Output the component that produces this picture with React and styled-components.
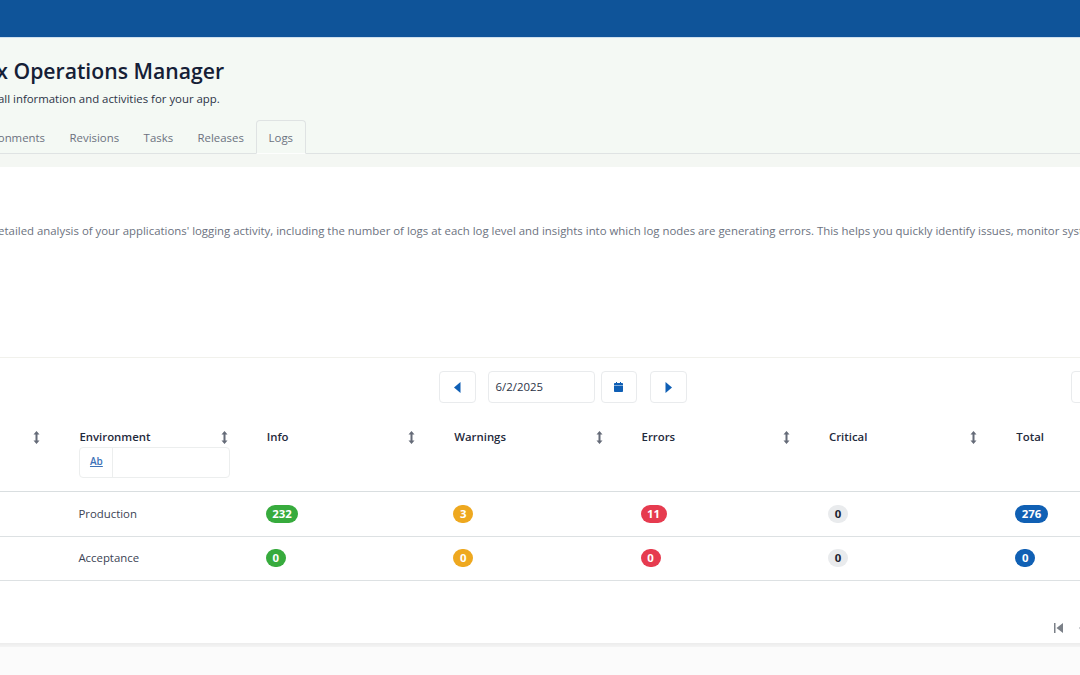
import React from "react";
import styled, { createGlobalStyle } from "styled-components";

const GlobalStyle = createGlobalStyle`
  html, body {
    margin: 0;
    height: 100%;
    overflow: hidden;
    background: #fbfbfb;
    font-family: "Open Sans", "Liberation Sans", sans-serif;
  }
`;

const columns = [
  { title: "Application" },
  { title: "Environment", filter: true },
  { title: "Info" },
  { title: "Warnings" },
  { title: "Errors" },
  { title: "Critical" },
  { title: "Total" },
];

const rows = [
  { env: "Production", info: 232, warnings: 3, errors: 11, critical: 0, total: 276 },
  { env: "Acceptance", info: 0, warnings: 0, errors: 0, critical: 0, total: 0 },
];

const SortIcon = () => (
  <svg width="7" height="13" viewBox="0 0 7 13" fill="#656b78">
    <path d="M3.500 0 6.500 3.600H4.500v5.800h2L3.500 13 .5 9.400h2V3.600H.5z" />
  </svg>
);

const CaretLeft = () => (
  <svg width="7" height="11" viewBox="0 0 7 11" fill="#0f5fb5">
    <path d="M6.500 0v11L0 5.500z" />
  </svg>
);

const CaretRight = () => (
  <svg width="7" height="11" viewBox="0 0 7 11" fill="#0f5fb5">
    <path d="M.5 0v11L7 5.500z" />
  </svg>
);

const CalendarIcon = () => (
  <svg width="9" height="10" viewBox="0 0 9 10" fill="#0f5fb5">
    <path d="M2 0h1v1h3V0h1v1h1.200c.4 0 .8.4.8.8V3H0V1.800C0 1.400.4 1 .8 1H2zM0 3.600h9v5.600c0 .4-.4.8-.8.8H.8c-.4 0-.8-.4-.8-.8z" />
  </svg>
);

const FirstPageIcon = () => (
  <svg width="9" height="10" viewBox="0 0 9 10" fill="#7b8088">
    <path d="M0 0h1.500v10H0zM9 0v10L2.500 5z" />
  </svg>
);

const PrevPageIcon = () => (
  <svg width="7" height="10" viewBox="0 0 7 10" fill="#7b8088">
    <path d="M7 0v10L0 5z" />
  </svg>
);

const App = () => {
  return (
    <>
      <GlobalStyle />
      <TopBar />
      <Page>
        <Header>
          <Title>Mendix Operations Manager</Title>
          <Subtitle>Overview of all information and activities for your app.</Subtitle>
          <Tabs>
            <Tab>Environments</Tab>
            <Tab>Revisions</Tab>
            <Tab>Tasks</Tab>
            <Tab>Releases</Tab>
            <Tab $active>Logs</Tab>
          </Tabs>
        </Header>
        <HeaderBand />
        <Content>
          <Intro>
            This page shows a detailed analysis of your applications' logging activity, including the number of logs at
            each log level and insights into which log nodes are generating errors. This helps you quickly identify
            issues, monitor system health and improve the stability of your apps.
          </Intro>
          <Toolbar>
            <DateGroup>
              <IconButton>
                <CaretLeft />
              </IconButton>
              <DateInput>6/2/2025</DateInput>
              <CalendarButton>
                <CalendarIcon />
              </CalendarButton>
              <IconButton>
                <CaretRight />
              </IconButton>
            </DateGroup>
            <ExportButton />
          </Toolbar>
          <Table>
            <HeadRow>
              {columns.map((col) => (
                <HeadCell key={col.title}>
                  <HeadTitle>
                    <span>{col.title}</span>
                    {col.title !== "Total" && <SortIcon />}
                  </HeadTitle>
                  {col.filter && (
                    <Filter>
                      <FilterType>Ab</FilterType>
                    </Filter>
                  )}
                </HeadCell>
              ))}
            </HeadRow>
            {rows.map((row, i) => (
              <Row key={row.env} $height={i === 0 ? 44 : 42} $pad={i === 0 ? 0 : 1}>
                <Cell />
                <Cell>{row.env}</Cell>
                <Cell>
                  <Badge $bg="#37ab3d">{row.info}</Badge>
                </Cell>
                <Cell>
                  <Badge $bg="#eea81f">{row.warnings}</Badge>
                </Cell>
                <Cell>
                  <Badge $bg="#e63b4f">{row.errors}</Badge>
                </Cell>
                <Cell>
                  <Badge $bg="#e9ebed" $color="#1b2232">
                    {row.critical}
                  </Badge>
                </Cell>
                <Cell>
                  <Badge $bg="#1060b4">{row.total}</Badge>
                </Cell>
              </Row>
            ))}
          </Table>
          <Pager>
            <FirstPageIcon />
            <PrevPageIcon />
          </Pager>
        </Content>
        <Bottom />
      </Page>
    </>
  );
};

const TopBar = styled.div`
  height: 37px;
  background: #0f5499;
`;

const Page = styled.div`
  width: 1400px;
  margin-left: -120px;
`;

const Header = styled.div`
  height: 117px;
  box-sizing: border-box;
  padding: 19px 0 0 52px;
  background: #f4f9f4;
  border-top: 1px solid #cfe0ee;
`;

const HeaderBand = styled.div`
  height: 13px;
  background: #f4f7f3;
`;

const Title = styled.h1`
  margin: 0;
  font-size: 21.2px;
  line-height: 28px;
  font-weight: 600;
  color: #152036;
`;

const Subtitle = styled.p`
  margin: 4px 0 0;
  font-size: 11.4px;
  line-height: 20px;
  color: #2b3346;
`;

const Tabs = styled.div`
  display: flex;
  height: 34px;
  margin: 11px 0 0 27px;
  border-bottom: 1px solid #dfe3e3;
  box-sizing: border-box;
`;

const Tab = styled.div`
  height: 34px;
  box-sizing: border-box;
  padding: 0 ${(p) => (p.$active ? "11.5px" : "12.25px")};
  line-height: 36px;
  font-size: 11.4px;
  color: #6c7280;
  ${(p) =>
    p.$active &&
    `
    border: 1px solid #dfe3e3;
    border-bottom: 1px solid #fdfefd;
    border-radius: 4px 4px 0 0;
    line-height: 34px;
  `}
`;

const Content = styled.div`
  background: #fff;
  height: 476px;
`;

const Intro = styled.p`
  margin: 0;
  width: 1700px;
  height: 135px;
  padding: 55px 0 0 12px;
  font-size: 11.4px;
  line-height: 18px;
  color: #6c7280;
  border-bottom: 1px solid #f1f1ec;
`;

const Toolbar = styled.div`
  display: grid;
  grid-template-columns: 1fr auto 1fr;
  width: 1365px;
  padding-top: 13px;
`;

const DateGroup = styled.div`
  grid-column: 2;
  display: flex;
`;

const IconButton = styled.div`
  display: flex;
  align-items: center;
  justify-content: center;
  width: 37px;
  height: 32px;
  box-sizing: border-box;
  background: #fff;
  border: 1px solid #e9ebed;
  border-radius: 4px;
`;

const DateInput = styled.div`
  width: 107px;
  height: 32px;
  box-sizing: border-box;
  margin: 0 6px 0 12px;
  padding-left: 7px;
  border: 1px solid #e9ebed;
  border-radius: 4px;
  font-size: 11.4px;
  line-height: 30px;
  color: #2b3346;
`;

const CalendarButton = styled(IconButton)`
  width: 36px;
  margin-right: 13px;
`;

const ExportButton = styled(IconButton)`
  grid-column: 3;
  justify-self: end;
  width: 174px;
`;

const Table = styled.div`
  padding-left: 12px;
  padding-top: 25px;
`;

const HeadRow = styled.div`
  display: grid;
  grid-template-columns: repeat(7, 187.4px);
  height: 63px;
  border-bottom: 1px solid #d9dee0;
`;

const HeadCell = styled.div`
  padding-right: 36px;
  min-width: 0;
`;

const HeadTitle = styled.div`
  display: flex;
  align-items: center;
  justify-content: space-between;
  height: 18px;
  padding-right: 3px;
  font-size: 11.4px;
  font-weight: 600;
  color: #1f2a3c;

  span {
    align-self: flex-start;
    line-height: 18px;
  }
`;

const Filter = styled.div`
  display: flex;
  height: 31px;
  margin: 1px 1px 0 0;
  box-sizing: border-box;
  border: 1px solid #eceeee;
  border-radius: 4px;
`;

const FilterType = styled.div`
  width: 32px;
  border-right: 1px solid #eceeee;
  text-align: center;
  font-size: 10px;
  font-weight: 600;
  line-height: 27px;
  color: #3d72b8;
  text-decoration: underline;
`;

const Row = styled.div`
  display: grid;
  grid-template-columns: repeat(7, 187.4px);
  align-items: center;
  height: ${(p) => p.$height}px;
  padding-bottom: ${(p) => p.$pad}px;
  border-bottom: 1px solid #dde1e3;
`;

const Cell = styled.div`
  margin-left: -1px;
  font-size: 11.4px;
  line-height: 18px;
  color: #3b4354;
`;

const Badge = styled.span`
  display: block;
  width: fit-content;
  min-width: 20px;
  height: 18px;
  box-sizing: border-box;
  padding: 0 6.5px;
  border-radius: 9px;
  background: ${(p) => p.$bg};
  color: ${(p) => p.$color || "#fff"};
  font-size: 11.4px;
  font-weight: 700;
  line-height: 18px;
  text-align: center;
`;

const Pager = styled.div`
  display: flex;
  align-items: center;
  gap: 16px;
  height: 14px;
  padding: 40px 0 0 1174px;
`;

const Bottom = styled.div`
  height: 4px;
  background: linear-gradient(#ececec, #f4f4f4);
`;

export default App;
